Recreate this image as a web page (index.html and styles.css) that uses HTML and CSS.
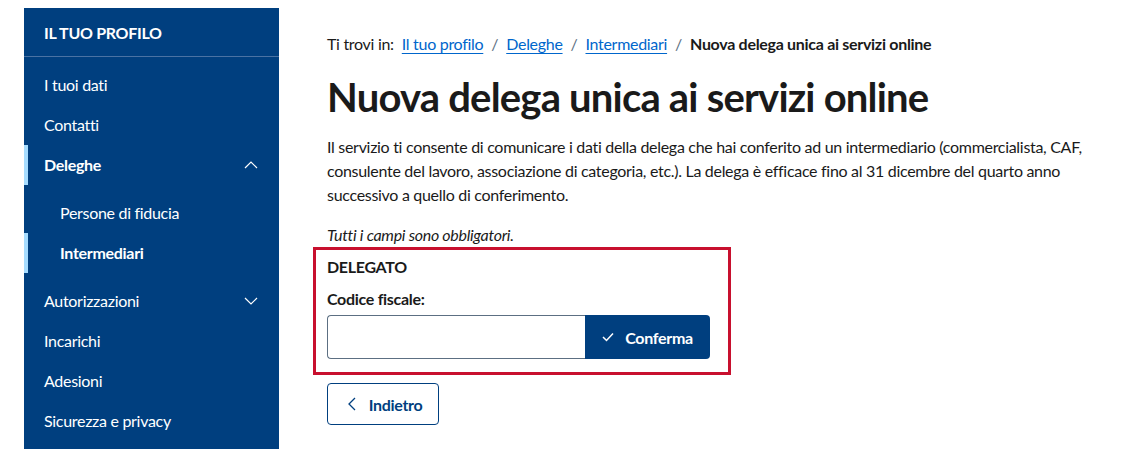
FILE: index.html
```html
<!DOCTYPE html>
<html lang="it">

<head>
	<meta charset="UTF-8">
	<meta name="viewport" content="width=device-width, initial-scale=1.0">
	<title>Nuova delega unica ai servizi online</title>
	<link rel="stylesheet" href="styles.css">
</head>

<body>
	<div class="page">
		<nav class="sidebar">
			<div class="side-title">IL TUO PROFILO</div>
			<ul class="side-menu">
				<li><a href="#">I tuoi dati</a></li>
				<li><a href="#">Contatti</a></li>
				<li>
					<a href="#" class="active">Deleghe
						<svg class="chev" viewBox="0 0 14 8"><path d="M1 7 L7 1 L13 7" /></svg>
					</a>
					<ul class="sub-menu">
						<li><a href="#">Persone di fiducia</a></li>
						<li><a href="#" class="active">Intermediari</a></li>
					</ul>
				</li>
				<li>
					<a href="#">Autorizzazioni
						<svg class="chev" viewBox="0 0 14 8"><path d="M1 1 L7 7 L13 1" /></svg>
					</a>
				</li>
				<li><a href="#">Incarichi</a></li>
				<li><a href="#">Adesioni</a></li>
				<li><a href="#">Sicurezza e privacy</a></li>
			</ul>
		</nav>

		<main class="content">
			<div class="breadcrumb">
				<span>Ti trovi in:</span>
				<a href="#">Il tuo profilo</a>
				<span class="sep">/</span>
				<a href="#">Deleghe</a>
				<span class="sep">/</span>
				<a href="#">Intermediari</a>
				<span class="sep">/</span>
				<strong>Nuova delega unica ai servizi online</strong>
			</div>

			<h1>Nuova delega unica ai servizi online</h1>

			<p class="intro">Il servizio ti consente di comunicare i dati della delega che hai conferito ad un intermediario (commercialista, CAF, consulente del lavoro, associazione di categoria, etc.). La delega è efficace fino al 31 dicembre del quarto anno successivo a quello di conferimento.</p>

			<p class="note">Tutti i campi sono obbligatori.</p>

			<div class="form-box">
				<div class="box-title">DELEGATO</div>
				<label class="label" for="cf">Codice fiscale:</label>
				<div class="input-group">
					<input type="text" id="cf" class="input">
					<button class="btn-primary">
						<svg class="ico" viewBox="0 0 12 10"><path d="M1 5 L4.5 8.5 L11 1.5" /></svg>
						Conferma
					</button>
				</div>
			</div>

			<button class="btn-outline">
				<svg class="ico-back" viewBox="0 0 8 14"><path d="M7 1 L1 7 L7 13" /></svg>
				Indietro
			</button>
		</main>
	</div>
</body>

</html>
```

FILE: styles.css
```css
* {
	margin: 0px;
	padding: 0px;
	box-sizing: border-box;
}

body {
	font-family: "Lato", "Noto Sans", sans-serif;
	font-size: 16px;
	letter-spacing: -0.3px;
	color: #1a1a1a;
	background-color: #ffffff;
}

a {
	text-decoration: none;
	color: inherit;
}

ul {
	list-style: none;
}

.page {
	display: flex;
	padding: 8px 24px;
}

.sidebar {
	width: 255px;
	flex-shrink: 0;
	background-color: #003f7f;
	color: #ffffff;
	padding-bottom: 8px;
}

.side-title {
	height: 49px;
	padding-left: 20px;
	display: flex;
	align-items: center;
	font-weight: 700;
	border-bottom: 1px solid #4a72a3;
}

.side-menu {
	padding-top: 8px;
}

.side-menu a {
	display: flex;
	align-items: center;
	justify-content: space-between;
	height: 40px;
	padding: 0px 20px 1px 16px;
	border-left: 4px solid transparent;
}

.side-menu a.active {
	font-weight: 700;
	border-left-color: #a6dcff;
}

.sub-menu {
	padding: 8px 0px;
}

.sub-menu a {
	padding-left: 32px;
}

.chev {
	width: 14px;
	height: 8px;
	fill: none;
	stroke: #ffffff;
	stroke-width: 1.2;
	margin-right: 1px;
}

.content {
	margin-left: 48px;
	padding-top: 24px;
}

.breadcrumb {
	line-height: 24px;
	display: flex;
	gap: 8px;
}

.breadcrumb a {
	color: #0066cc;
	text-decoration: underline;
	text-underline-offset: 3px;
}

.breadcrumb .sep {
	color: #5c6f82;
}

.breadcrumb strong {
	font-weight: 700;
}

h1 {
	font-size: 40px;
	line-height: 48px;
	font-weight: 700;
	letter-spacing: -0.8px;
	margin-top: 17px;
}

.intro {
	line-height: 24px;
	margin-top: 14px;
	max-width: 760px;
}

.note {
	font-style: italic;
	line-height: 24px;
	margin-top: 16px;
}

.form-box {
	width: 418px;
	margin-left: -14px;
	border: 3px solid #c8102e;
	padding: 5px 18px 13px 11px;
}

.box-title {
	font-weight: 700;
	line-height: 24px;
}

.label {
	display: block;
	font-weight: 700;
	line-height: 24px;
	margin-top: 8px;
}

.input-group {
	display: flex;
	margin-top: 4px;
	height: 44px;
}

.input {
	width: 258px;
	border: 1px solid #5c6f82;
	border-right: none;
	border-radius: 4px 0px 0px 4px;
	font-family: inherit;
	font-size: 16px;
	padding: 0px 8px;
}

.btn-primary {
	width: 125px;
	background-color: #003f7f;
	border: none;
	border-radius: 0px 4px 4px 0px;
	color: #ffffff;
	font-family: inherit;
	font-size: 16px;
	font-weight: 700;
	letter-spacing: inherit;
	display: flex;
	align-items: center;
	justify-content: center;
	gap: 11px;
}

.ico {
	width: 12px;
	height: 10px;
	fill: none;
	stroke: #ffffff;
	stroke-width: 1.5;
}

.btn-outline {
	margin-top: 8px;
	width: 112px;
	height: 42px;
	background-color: #ffffff;
	border: 1px solid #003f7f;
	border-radius: 4px;
	color: #003f7f;
	font-family: inherit;
	font-size: 16px;
	font-weight: 700;
	letter-spacing: inherit;
	display: flex;
	align-items: center;
	justify-content: center;
	gap: 13px;
	padding-left: 4px;
}

.ico-back {
	width: 8px;
	height: 14px;
	fill: none;
	stroke: #003f7f;
	stroke-width: 1.3;
}
```
